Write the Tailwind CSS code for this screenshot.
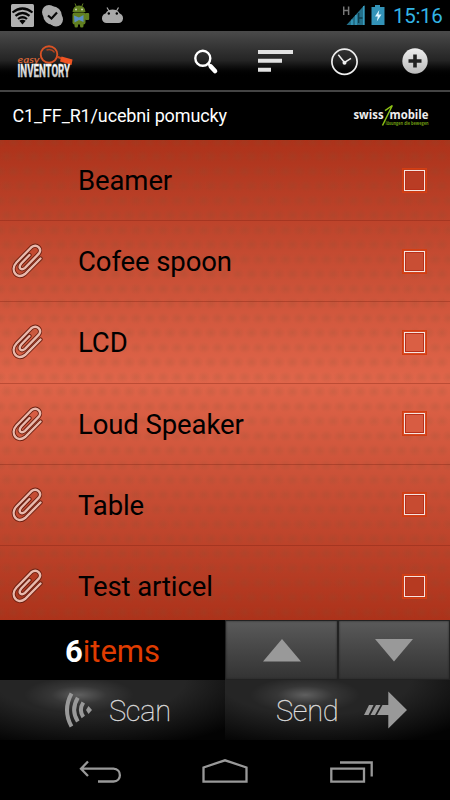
<!DOCTYPE html>
<html lang="en">
  <head>
    <meta charset="UTF-8" />
    <meta name="viewport" content="width=device-width, initial-scale=1.0" />
    <title>Easy Inventory</title>
    <script src="https://cdn.jsdelivr.net/npm/@tailwindcss/browser@4"></script>
  </head>
  <body class="bg-black select-none">
    <div
      class="w-[450px] h-[800px] flex flex-col overflow-hidden font-[Roboto,sans-serif]"
    >
      <!-- status bar -->
      <div class="h-[31px] shrink-0 flex items-center justify-between">
        <svg class="w-[130px] h-[31px]" viewBox="0 0 130 31">
          <rect x="11" y="4" width="23" height="23" rx="1.5" fill="#b0b0b0" />
          <g fill="none" stroke="#050505" stroke-width="2.2">
            <path d="M12.5 12.5Q22.500 4.500 32.500 12.500" />
            <path d="M15.500 15.800Q22.500 10.200 29.500 15.800" />
            <path d="M18 19Q22.500 15.500 27 19" />
          </g>
          <path d="M19.300 20.800Q22.500 18.500 25.700 20.800L22.500 24.500Z" fill="#050505" />
          <circle cx="49" cy="12" r="7" fill="#aaa" />
          <circle cx="56" cy="19.500" r="7" fill="#aaa" />
          <circle cx="52.500" cy="15.500" r="9.300" fill="#aaa" />
          <path d="M48 15.500L51.500 18.500L57 12.500" fill="none" stroke="#080808" stroke-width="2.200" />
          <g fill="#617f20">
            <path d="M72.500 12Q73 5.500 79 5.500Q85 5.500 85.500 12Z" />
            <rect x="72.500" y="12.500" width="13" height="12" rx="2" />
            <rect x="74.500" y="22" width="3.500" height="5.500" rx="1.500" />
            <rect x="80" y="22" width="3.500" height="5.500" rx="1.500" />
            <rect x="85" y="13" width="4.200" height="7" rx="1" />
            <path d="M75 3.500L76.500 7M83 3.500L81.500 7" stroke="#617f20" />
          </g>
          <circle cx="76" cy="9.500" r="1" fill="#ccd5b0" />
          <circle cx="82" cy="9.500" r="1" fill="#ccd5b0" />
          <path d="M74 15.500L79 17.500L83.500 15V22L79 20L74.500 22.500Z" fill="#5b8fc4" />
          <g fill="#a9a9a9">
            <path d="M105 17Q105 9.500 112.500 9.500Q120 9.500 120.500 17Z" />
            <rect x="102" y="13.500" width="21" height="9.500" rx="4.500" />
            <path d="M107 7.500L109 11M118.500 7.500L116.500 11" stroke="#a9a9a9" stroke-width="1.200" />
          </g>
          <circle cx="108.800" cy="13.500" r="1.200" fill="#000" />
          <circle cx="116.800" cy="13.500" r="1.200" fill="#000" />
        </svg>
        <div class="flex items-center h-full">
          <svg class="w-[50px] h-[31px]" viewBox="0 0 50 31">
            <path d="M0.700 6.500V15M5.600 6.500V15M0.700 10.500H5.600" fill="none" stroke="#777" stroke-width="1.500" />
            <path d="M3.500 25L21.500 5V25Z" fill="#246f89" />
            <path d="M9 19.500V25M13 15V25M20.800 6V25" stroke="#3aa3c6" stroke-width="1.400" />
            <path d="M15.700 13V23M15.500 18H19.500" stroke="#0d3c4c" stroke-width="1.300" />
            <path d="M28.500 7H32V5H37V7H41.500V25H28.500Z" fill="#3393b8" />
            <path d="M36.300 10L32 16.500H34.800L33.800 21.500L38.500 14.500H35.500Z" fill="#dff6ff" />
          </svg>
          <span class="text-[#33b5e5] text-[20.5px] leading-[31px] w-[57px] tracking-[-0.3px] pt-px"
            >15:16</span
          >
        </div>
      </div>

      <!-- action bar -->
      <header
        class="h-[61px] shrink-0 flex justify-between border-b-2 border-[#444] bg-linear-to-b from-[#4b4b4b] via-[#242424] to-black to-80%"
      >
        <svg class="w-[80px] h-[59px]" viewBox="0 31 80 59">
          <defs>
            <linearGradient id="chrome" x1="0" y1="0" x2="0" y2="1">
              <stop offset="0.2" stop-color="#fff" />
              <stop offset="1" stop-color="#aaa" />
            </linearGradient>
          </defs>
          <circle cx="49" cy="54.500" r="8.300" fill="none" stroke="#d95325" stroke-width="1.900" />
          <path d="M46.500 50Q52 48.500 54.500 52.500" fill="none" stroke="#b5451f" stroke-width="1.400" />
          <path d="M57 56.500L61.500 58.500" stroke="#c8481d" stroke-width="2" />
          <path d="M61.500 56.500L72.500 59.500L71.500 65L60 61.500Z" fill="#f05423" />
          <text x="17.500" y="62.500" font-family="Lato" font-size="10" font-style="italic" font-weight="700" textLength="22" lengthAdjust="spacingAndGlyphs" fill="#cf6237">easy</text>
          <g transform="translate(17.500 76.800) scale(1 1.350)">
            <text x="0" y="0" font-family="Roboto" font-weight="700" font-size="13" textLength="52.500" lengthAdjust="spacingAndGlyphs" fill="url(#chrome)" stroke="#ddd" stroke-width="0.300">INVENTORY</text>
          </g>
        </svg>
        <svg class="w-[270px] h-[59px]" viewBox="180 31 270 59">
          <defs>
            <linearGradient id="plus" x1="0" y1="0" x2="0" y2="1">
              <stop offset="0" stop-color="#eee" />
              <stop offset="1" stop-color="#bbb" />
            </linearGradient>
          </defs>
          <circle cx="202.800" cy="58.300" r="7.500" fill="none" stroke="#fff" stroke-width="2.400" />
          <path d="M208 63.500L211 66.500" stroke="#fff" stroke-width="2.500" />
          <path d="M210.800 66.500L215 71" stroke="#fff" stroke-width="4.600" stroke-linecap="round" />
          <path d="M258 50H293V54H258ZM258 58.800H282V62.800H258ZM258 67.800H271V71.800H258Z" fill="#e2e2e2" />
          <circle cx="344.500" cy="61.700" r="12.600" fill="none" stroke="#eee" stroke-width="1.700" />
          <path d="M338.300 54.800L344.500 62.500L351 58.300" fill="none" stroke="#eee" stroke-width="1.500" />
          <circle cx="344.500" cy="62.700" r="2" fill="#eee" />
          <circle cx="415" cy="61" r="12.700" fill="url(#plus)" />
          <path d="M415 54.500V67.500M408.500 61H421.500" stroke="#222" stroke-width="3.600" />
        </svg>
      </header>

      <!-- location -->
      <div class="h-12 shrink-0 flex justify-between items-center pl-[12.5px] pr-5">
        <span class="text-white text-[18px] leading-6 tracking-[-0.14px]">C1_FF_R1/ucebni pomucky</span>
        <svg class="w-[78px] h-[48px]" viewBox="352 92 78 48">
          <g font-family="Open Sans" font-weight="700">
            <text x="353.500" y="119" font-size="12.500" textLength="30" lengthAdjust="spacingAndGlyphs" fill="#eee">swiss</text>
            <text x="389.500" y="119" font-size="12.500" textLength="39" lengthAdjust="spacingAndGlyphs" fill="#eee">mobile</text>
            <text x="385.500" y="125" font-size="4.500" textLength="43" lengthAdjust="spacingAndGlyphs" fill="#6c9a10">lösungen die bewegen</text>
          </g>
          <path d="M382.500 125.500L392.300 105.500L385 110.700" fill="none" stroke="#8cc014" stroke-width="1.500" />
        </svg>
      </div>

      <!-- article list -->
      <main
        class="relative h-[480px] shrink-0 overflow-hidden bg-linear-to-b from-[#ac321a] via-[#e0654a] to-[#ac321a]"
      >
        <svg class="absolute inset-0 w-full h-full">
          <defs>
            <radialGradient id="dot">
              <stop offset="0" stop-color="#7d5235" stop-opacity="0.17" />
              <stop offset="1" stop-color="#7d5235" stop-opacity="0" />
            </radialGradient>
            <pattern id="dots" width="27.2" height="29.4" patternUnits="userSpaceOnUse" y="-5">
              <ellipse cx="13.600" cy="7" rx="7" ry="6" fill="url(#dot)" />
              <ellipse cx="0" cy="7" rx="7" ry="6" fill="url(#dot)" />
              <ellipse cx="27.200" cy="7" rx="7" ry="6" fill="url(#dot)" />
              <ellipse cx="6.800" cy="21.500" rx="7" ry="6" fill="url(#dot)" />
              <ellipse cx="20.400" cy="21.500" rx="7" ry="6" fill="url(#dot)" />
            </pattern>
            <path id="wire" d="M18.500 12L10.300 20.500C6.500 25 10.500 28 14 24.800L27.800 10.700C31.500 6 26 0 20.300 4.300L5.500 19.500C-1.500 27 6 37.500 14 31L29.500 15.500" />
          </defs>
          <rect width="450" height="480" fill="url(#dots)" />
        </svg>
        <ul id="articles" class="relative"></ul>
      </main>

      <!-- counter and paging -->
      <div class="h-[60px] shrink-0 flex">
        <div class="w-[225px] flex justify-center items-center text-[31px] leading-[60px] pt-[3px]">
          <span class="text-white font-bold">6</span
          ><span class="text-[#e03c00]">items</span>
        </div>
        <div
          class="w-[113px] flex justify-center items-center bg-linear-to-b from-[#5a5a5a] to-[#333] border border-[#222] shadow-[inset_0_0_2px_#222]"
        >
          <svg class="w-[38px] h-[23px]" viewBox="0 0 38 23">
            <path d="M19 0L38 22.500H0Z" fill="#999" />
          </svg>
        </div>
        <div
          class="w-[112px] flex justify-center items-center bg-linear-to-b from-[#5a5a5a] to-[#333] border border-[#222] shadow-[inset_0_0_2px_#222]"
        >
          <svg class="w-[38px] h-[23px]" viewBox="0 0 38 23">
            <path d="M0 0H38L19 22.500Z" fill="#999" />
          </svg>
        </div>
      </div>

      <!-- scan / send -->
      <div class="h-[60px] shrink-0 flex text-[#ddd] font-thin text-[29px] leading-[60px]">
        <div
          class="w-[225px] flex items-center pl-[64px] bg-[radial-gradient(ellipse_55px_18px_at_79px_15px,#ffffff44,#ffffff14_50%,transparent),radial-gradient(ellipse_190px_70px_at_90px_0px,#252525_50%,#030303)]"
        >
          <svg class="w-[29px] h-[36px]" viewBox="64 692 29 36">
            <g fill="none" stroke="#999" stroke-width="4">
              <path d="M71.500 693.500Q62.500 710 71.500 726.500" />
              <path d="M77.800 697.800Q70.500 710 77.800 721.500" />
              <path d="M83.300 702.500Q78.500 710 83.300 717" />
            </g>
            <path d="M86 710L88.500 706L92 710L88.500 714Z" fill="#999" />
          </svg>
          <span class="pl-4 pt-px tracking-[-0.3px] [-webkit-text-stroke:0.3px_#ddd]">Scan</span>
        </div>
        <div
          class="w-[225px] flex items-center pl-[51px] bg-[radial-gradient(ellipse_55px_18px_at_80px_15px,#ffffff44,#ffffff14_50%,transparent),radial-gradient(ellipse_190px_70px_at_90px_0px,#252525_50%,#030303)]"
        >
          <span class="w-[88px] pt-px tracking-[-0.3px] [-webkit-text-stroke:0.3px_#ddd]">Send</span>
          <svg class="w-[43px] h-[38px]" viewBox="364 690 43 38">
            <path d="M388.300 690.500L407 709L388.300 727.500V714H377L382.500 704H388.300ZM369 704H373.500L368.500 714H364ZM376 704H380.500L375 714H370.500Z" fill="#999" />
          </svg>
        </div>
      </div>

      <!-- system navigation -->
      <nav class="h-[60px] shrink-0">
        <svg class="w-[450px] h-[60px]" viewBox="0 740 450 60">
          <g fill="none" stroke="#999" stroke-width="2.300">
            <path d="M88 761.500L81 768.700L88 776M81 768.700H113.500C122 769 122 781.500 113.500 781.500H98" />
            <path d="M203.500 781.700V767.500L225 760.300L246.500 767.500V781.700Z" />
            <path d="M331.300 768.600H364V781.700H331.300ZM340 762.500H371.700V776.500" />
          </g>
        </svg>
      </nav>
    </div>

    <script>
      const articles = [
        { name: "Beamer", attachment: false },
        { name: "Cofee spoon", attachment: true },
        { name: "LCD", attachment: true },
        { name: "Loud Speaker", attachment: true },
        { name: "Table", attachment: true },
        { name: "Test articel", attachment: true },
      ];

      const clip = `
        <svg class="w-[34px] h-[36px]" viewBox="0 0 34 36" fill="none" stroke-linecap="round">
          <use href="#wire" stroke="#6b1f10" stroke-width="4.200" />
          <use href="#wire" stroke="#e9b9ac" stroke-width="2.400" />
        </svg>`;

      const list = document.getElementById("articles");
      articles.forEach((article) => {
        const row = document.createElement("li");
        row.className =
          "h-[81.2px] flex items-center border-b border-[#7a2010]/35 pl-[11px] pr-[23.5px]";
        row.innerHTML = `
          <div class="w-[67px]">${article.attachment ? clip : ""}</div>
          <span class="grow text-black text-[27.5px] leading-8 tracking-[-0.1px] pt-[2px]">${article.name}</span>
          <div class="size-[25px] border border-[#d43e12] bg-[#d43e12]/60 p-px">
            <div class="size-full border border-[#f6e4e0] bg-[#c9482e] shadow-[inset_0_0_0_1px_#b8301a]"></div>
          </div>`;
        row.querySelector("div.size-full").style.backgroundColor =
          ["#b93c24", "#c94e34", "#da5f44", "#d85c42", "#c74b31", "#b63a21"][
            list.children.length
          ];
        list.appendChild(row);
      });
    </script>
  </body>
</html>
